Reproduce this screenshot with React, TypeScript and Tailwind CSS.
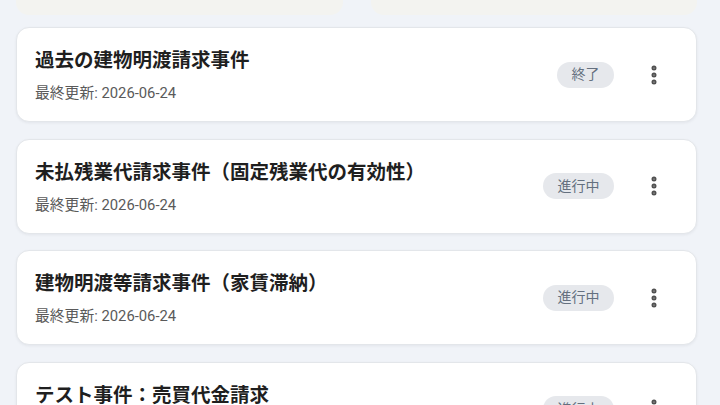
import React from 'react';
import { EllipsisVertical } from 'lucide-react';

interface CaseItem {
  id: string;
  title: string;
  updatedAt: string;
  status: string;
}

const cases: CaseItem[] = [
  { id: '1', title: '過去の建物明渡請求事件', updatedAt: '2026-06-24', status: '終了' },
  { id: '2', title: '未払残業代請求事件（固定残業代の有効性）', updatedAt: '2026-06-24', status: '進行中' },
  { id: '3', title: '建物明渡等請求事件（家賃滞納）', updatedAt: '2026-06-24', status: '進行中' },
  { id: '4', title: 'テスト事件：売買代金請求', updatedAt: '2026-06-24', status: '進行中' },
];

const CaseCard: React.FC<{ item: CaseItem }> = ({ item }) => (
  <div className="flex h-[95px] shrink-0 items-center rounded-[13px] border border-[#e3e6ea] bg-white pl-[18px] pr-[22px] shadow-[0_1px_3px_rgba(15,23,42,0.06)]">
    <div className="flex min-w-0 flex-1 flex-col pt-[2px]">
      <h3 className="text-[19.5px] font-semibold leading-[26px] text-[#1f1f1f]">{item.title}</h3>
      <p className="mt-[9px] text-[14.8px] leading-[20px] text-[#5a5a5a]">最終更新: {item.updatedAt}</p>
    </div>
    <span className="flex h-[26px] items-center rounded-full bg-[#e6e8ec] px-[14.5px] text-[14px] text-[#64707f]">
      {item.status}
    </span>
    <button className="ml-[20px] flex h-10 w-10 items-center justify-center text-[#505050]">
      <EllipsisVertical className="h-6 w-6" strokeWidth={3} />
    </button>
  </div>
);

export default function App() {
  return (
    <div
      className="flex h-[405px] w-[720px] flex-col overflow-hidden bg-[#f0f3f8] pl-4 pr-[23px]"
      style={{ fontFamily: '"Roboto", "Noto Sans CJK JP", sans-serif' }}
    >
      <div className="flex h-[15px] shrink-0 gap-[28px]">
        <div className="flex-1 rounded-b-[13px] bg-[#f3f3f0]" />
        <div className="flex-1 rounded-b-[13px] bg-[#f3f3f0]" />
      </div>
      <div className="mt-[12px] flex flex-col gap-[16.5px]">
        {cases.map(c => (
          <CaseCard key={c.id} item={c} />
        ))}
      </div>
    </div>
  );
}
